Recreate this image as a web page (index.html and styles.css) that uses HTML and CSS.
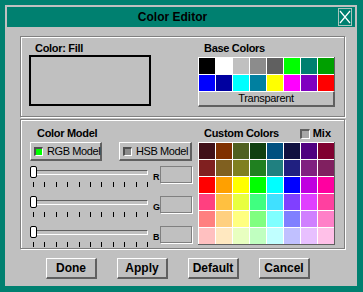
FILE: index.html
```html
<html>
   <head>
      <title>Color Editor</title>
      <link rel="stylesheet" href="styles.css">
   </head>
   <body>
      <div class="window">
         <div class="inner">
            <div class="titlebar">
               <div class="title">Color Editor</div>
               <div class="close">
                  <svg width="12" height="16" viewBox="0 0 12 16"><path d="M1 2 L11 14 M11 2 L1 14" stroke="#fff" stroke-width="1.2" fill="none"/></svg>
               </div>
            </div>
            <div class="content">
               <div class="panel fill">
                  <div class="col left">
                     <div class="label">Color: Fill</div>
                     <div class="preview"></div>
                  </div>
                  <div class="col right">
                     <div class="label">Base Colors</div>
                     <div class="swatches">
                        <div class="cell" style="background:#000000"></div>
                        <div class="cell" style="background:#ffffff"></div>
                        <div class="cell" style="background:#c0c0c0"></div>
                        <div class="cell" style="background:#8c8c8c"></div>
                        <div class="cell" style="background:#606060"></div>
                        <div class="cell" style="background:#00ff00"></div>
                        <div class="cell" style="background:#008070"></div>
                        <div class="cell" style="background:#00a000"></div>
                        <div class="cell" style="background:#0000ff"></div>
                        <div class="cell" style="background:#0000a0"></div>
                        <div class="cell" style="background:#00ffff"></div>
                        <div class="cell" style="background:#0080a0"></div>
                        <div class="cell" style="background:#ffff00"></div>
                        <div class="cell" style="background:#ff00ff"></div>
                        <div class="cell" style="background:#8000c0"></div>
                        <div class="cell" style="background:#ff0000"></div>
                     </div>
                     <div class="btn wide">Transparent</div>
                  </div>
               </div>
               <div class="panel model">
                  <div class="col left">
                     <div class="label">Color Model</div>
                     <div class="modes">
                        <div class="btn mode"><span class="lamp on"></span>RGB Model</div>
                        <div class="btn mode"><span class="lamp"></span>HSB Model</div>
                     </div>
                     <div class="sliders">
                        <div class="srow">
                           <div class="slider">
                              <div class="track"></div>
                              <div class="thumb"></div>
                              <div class="ticks"><i></i><i></i><i></i><i></i><i></i><i></i><i></i><i></i><i></i><i></i><i></i></div>
                           </div>
                           <div class="axis">R</div>
                           <div class="field"></div>
                        </div>
                        <div class="srow">
                           <div class="slider">
                              <div class="track"></div>
                              <div class="thumb"></div>
                              <div class="ticks"><i></i><i></i><i></i><i></i><i></i><i></i><i></i><i></i><i></i><i></i><i></i></div>
                           </div>
                           <div class="axis">G</div>
                           <div class="field"></div>
                        </div>
                        <div class="srow">
                           <div class="slider">
                              <div class="track"></div>
                              <div class="thumb"></div>
                              <div class="ticks"><i></i><i></i><i></i><i></i><i></i><i></i><i></i><i></i><i></i><i></i><i></i></div>
                           </div>
                           <div class="axis">B</div>
                           <div class="field"></div>
                        </div>
                     </div>
                  </div>
                  <div class="col right">
                     <div class="head">
                        <div class="label">Custom Colors</div>
                        <div class="mix"><span class="check"></span>Mix</div>
                     </div>
                     <div class="swatches custom">
                        <div class="cell" style="background:#401018"></div>
                        <div class="cell" style="background:#803000"></div>
                        <div class="cell" style="background:#506020"></div>
                        <div class="cell" style="background:#104010"></div>
                        <div class="cell" style="background:#005080"></div>
                        <div class="cell" style="background:#101040"></div>
                        <div class="cell" style="background:#500080"></div>
                        <div class="cell" style="background:#800030"></div>
                        <div class="cell" style="background:#802020"></div>
                        <div class="cell" style="background:#806020"></div>
                        <div class="cell" style="background:#808020"></div>
                        <div class="cell" style="background:#208020"></div>
                        <div class="cell" style="background:#208080"></div>
                        <div class="cell" style="background:#202080"></div>
                        <div class="cell" style="background:#802080"></div>
                        <div class="cell" style="background:#802060"></div>
                        <div class="cell" style="background:#ff0000"></div>
                        <div class="cell" style="background:#ffa000"></div>
                        <div class="cell" style="background:#ffff00"></div>
                        <div class="cell" style="background:#00ff00"></div>
                        <div class="cell" style="background:#00ffff"></div>
                        <div class="cell" style="background:#0000ff"></div>
                        <div class="cell" style="background:#c000e0"></div>
                        <div class="cell" style="background:#ff00a0"></div>
                        <div class="cell" style="background:#ff4080"></div>
                        <div class="cell" style="background:#ffc040"></div>
                        <div class="cell" style="background:#e8ff40"></div>
                        <div class="cell" style="background:#40ff80"></div>
                        <div class="cell" style="background:#40e0ff"></div>
                        <div class="cell" style="background:#8040ff"></div>
                        <div class="cell" style="background:#e040ff"></div>
                        <div class="cell" style="background:#ff40a0"></div>
                        <div class="cell" style="background:#ff8080"></div>
                        <div class="cell" style="background:#ffd080"></div>
                        <div class="cell" style="background:#ffff80"></div>
                        <div class="cell" style="background:#80ff80"></div>
                        <div class="cell" style="background:#80ffff"></div>
                        <div class="cell" style="background:#8080ff"></div>
                        <div class="cell" style="background:#d080ff"></div>
                        <div class="cell" style="background:#ff80c8"></div>
                        <div class="cell" style="background:#ffc0c0"></div>
                        <div class="cell" style="background:#ffe8c0"></div>
                        <div class="cell" style="background:#e8ffc0"></div>
                        <div class="cell" style="background:#c0ffc0"></div>
                        <div class="cell" style="background:#c0ffff"></div>
                        <div class="cell" style="background:#c0c0ff"></div>
                        <div class="cell" style="background:#e8c0ff"></div>
                        <div class="cell" style="background:#ffc0e8"></div>
                     </div>
                  </div>
               </div>
               <div class="actions">
                  <div class="btn action">Done</div>
                  <div class="btn action">Apply</div>
                  <div class="btn action">Default</div>
                  <div class="btn action">Cancel</div>
               </div>
            </div>
         </div>
      </div>
   </body>
</html>
```

FILE: styles.css
```css
body {
   margin: 0;
   font-family: "Liberation Sans", Arial, sans-serif;
   color: #000;
}
.window {
   width: 363px;
   height: 292px;
   box-sizing: border-box;
   border-style: solid;
   border-color: #008070;
   border-width: 5px 6px 6px 5px;
   background: #008070;
}
.inner {
   height: 100%;
   box-sizing: border-box;
   padding: 2px;
   background: #c0c0c0;
}
.titlebar {
   display: flex;
   height: 20px;
   background: #008070;
}
.title {
   flex: 1;
   text-align: center;
   font-size: 12px;
   font-weight: bold;
   line-height: 20px;
}
.close {
   width: 14px;
   height: 18px;
   margin: 1px 3px 0 0;
   box-sizing: border-box;
   border: 1px solid #a8c4bc;
   display: flex;
   align-items: center;
   justify-content: center;
}
.close svg {
   display: block;
}
.content {
   padding: 9px 10px 0 13px;
}
.panel {
   display: flex;
   box-sizing: border-box;
   border: 1px solid #808080;
   box-shadow: inset 1px 1px #fff, 1px 1px #fff;
}
.panel.fill {
   height: 81px;
   padding-top: 5px;
}
.panel.model {
   height: 130px;
   margin-top: 2px;
   padding-top: 7px;
}
.col.left {
   width: 177px;
   box-sizing: border-box;
   padding-left: 8px;
}
.panel.model .col.left {
   padding-left: 9px;
}
.label {
   font-size: 11px;
   font-weight: bold;
   line-height: 13px;
   letter-spacing: -0.3px;
   padding-left: 6px;
}
.panel.model .col.left .label {
   padding-left: 7px;
}
.preview {
   width: 122px;
   height: 51px;
   box-sizing: border-box;
   border: 2px solid #000;
}
.swatches {
   display: grid;
   grid-template-columns: repeat(8, 17px);
   width: 137px;
   box-sizing: border-box;
   border-right: 1px solid #606060;
   margin-top: 2px;
}
.swatches.custom {
   border-bottom: 1px solid #606060;
}
.cell {
   height: 17px;
   box-sizing: border-box;
   border-top: 1px solid #fff;
   border-left: 1px solid #fff;
}
.btn {
   box-sizing: border-box;
   background: #c0c0c0;
   border-style: solid;
   border-width: 1px 2px 2px 1px;
   border-color: #fff #606060 #606060 #fff;
   font-size: 11px;
   letter-spacing: -0.3px;
   white-space: nowrap;
}
.btn.wide {
   width: 137px;
   height: 16px;
   text-align: center;
   line-height: 13px;
}
.modes {
   display: flex;
   gap: 17px;
   margin-top: 2px;
}
.btn.mode {
   width: 72px;
   height: 19px;
   display: flex;
   align-items: center;
   padding-left: 3px;
   letter-spacing: -0.4px;
}
.btn.mode + .btn.mode {
   width: 73px;
}
.lamp {
   flex: none;
   width: 9px;
   height: 9px;
   box-sizing: border-box;
   margin-right: 4px;
   border-style: solid;
   border-width: 2px 1px 1px 2px;
   border-color: #505050 #fff #fff #505050;
   background: #8c8c8c;
}
.lamp.on {
   background: #00ff00;
}
.sliders {
   margin-top: 5px;
}
.srow {
   display: flex;
   height: 22px;
   margin-bottom: 8px;
}
.slider {
   position: relative;
   width: 119px;
   height: 22px;
}
.track {
   position: absolute;
   left: 2px;
   top: 4px;
   width: 116px;
   height: 5px;
   box-sizing: border-box;
   border-style: solid;
   border-width: 1px;
   border-color: #606060 #fff #fff #606060;
}
.thumb {
   position: absolute;
   left: 0;
   top: 0;
   width: 7px;
   height: 12px;
   box-sizing: border-box;
   border: 1px solid #000;
   border-radius: 2px;
   background: #fff;
}
.ticks {
   position: absolute;
   left: 3px;
   top: 16px;
   width: 115px;
   height: 5px;
   display: flex;
   justify-content: space-between;
}
.ticks i {
   width: 1px;
   background: #000;
}
.axis {
   width: 11px;
   box-sizing: border-box;
   padding-left: 4px;
   margin-top: 5px;
   font-size: 9px;
   font-weight: bold;
   line-height: 12px;
}
.field {
   width: 32px;
   height: 17px;
   box-sizing: border-box;
   border: 1px solid #808080;
   box-shadow: 1px 1px #fff;
}
.head {
   display: flex;
   justify-content: space-between;
   align-items: center;
   width: 137px;
}
.mix {
   display: flex;
   align-items: center;
   margin-right: 4px;
   font-size: 11px;
   font-weight: bold;
   line-height: 13px;
}
.check {
   width: 10px;
   height: 10px;
   box-sizing: border-box;
   margin-right: 3px;
   border-style: solid;
   border-width: 2px 1px 1px 2px;
   border-color: #606060 #fff #fff #606060;
   background: #a8a8a8;
}
.actions {
   display: flex;
   gap: 20px;
   margin-top: 9px;
   padding-left: 26px;
}
.btn.action {
   width: 51px;
   height: 21px;
   font-size: 12px;
   font-weight: bold;
   letter-spacing: 0;
   text-align: center;
   line-height: 18px;
}
```
